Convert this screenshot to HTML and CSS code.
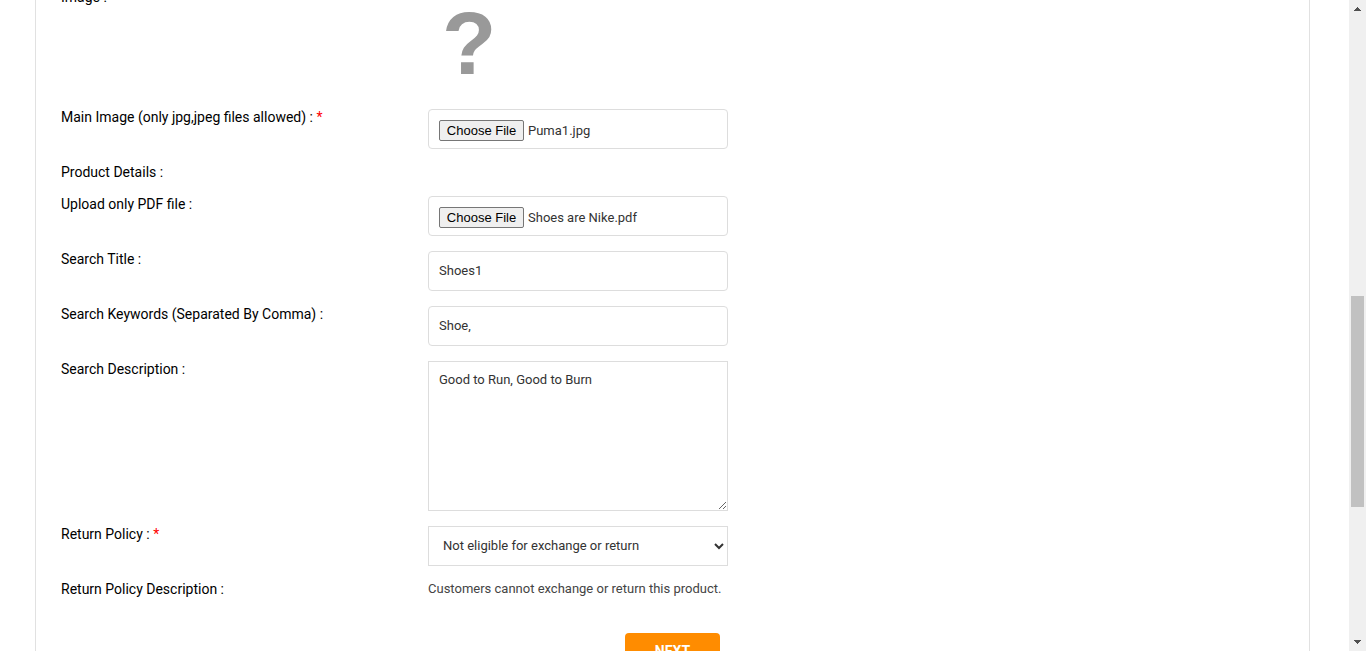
FILE: index.html
```html
<!DOCTYPE html>
<html lang="en">
<head>
<meta charset="utf-8">
<title>Product form</title>
<link rel="stylesheet" href="styles.css">
</head>
<body>
<div class="viewport">
  <main class="page">
    <form class="panel">
      <div class="row row-image">
        <label class="label">Image :</label>
        <div class="placeholder">?</div>
      </div>
      <div class="row">
        <label class="label">Main Image (only jpg,jpeg files allowed) : <span class="required">*</span></label>
        <div class="field file"><button type="button" class="choose">Choose File</button><span class="filename">Puma1.jpg</span></div>
      </div>
      <div class="row row-details">
        <label class="label">Product Details :</label>
      </div>
      <div class="row">
        <label class="label">Upload only PDF file :</label>
        <div class="field file"><button type="button" class="choose">Choose File</button><span class="filename">Shoes are Nike.pdf</span></div>
      </div>
      <div class="row">
        <label class="label" for="title">Search Title :</label>
        <input class="field" id="title" type="text" value="Shoes1">
      </div>
      <div class="row">
        <label class="label" for="keywords">Search Keywords (Separated By Comma) :</label>
        <input class="field" id="keywords" type="text" value="Shoe,">
      </div>
      <div class="row">
        <label class="label" for="description">Search Description :</label>
        <textarea class="field area" id="description">Good to Run, Good to Burn</textarea>
      </div>
      <div class="row">
        <label class="label" for="policy">Return Policy : <span class="required">*</span></label>
        <select class="field select" id="policy"><option>Not eligible for exchange or return</option></select>
      </div>
      <div class="row row-policy">
        <label class="label">Return Policy Description :</label>
        <p class="note">Customers cannot exchange or return this product.</p>
      </div>
      <button type="button" class="next">NEXT</button>
    </form>
  </main>
  <div class="scrollbar">
    <svg class="arrow" width="17" height="17" viewBox="0 0 17 17" shape-rendering="crispEdges"><path fill="#505050" d="M8 7h1v1h1v1h1v1h1v1H5v-1h1V9h1V8h1z"/></svg>
    <div class="track"><div class="thumb"></div></div>
    <svg class="arrow" width="17" height="17" viewBox="0 0 17 17" shape-rendering="crispEdges"><path fill="#505050" d="M5 6h7v1h-1v1h-1v1H9v1H8V9H7V8H6V7H5z"/></svg>
  </div>
</div>
</body>
</html>
```

FILE: styles.css
```css
* { box-sizing: border-box; }

body {
  margin: 0;
  overflow: hidden;
  background: #fff;
  font-family: Roboto, "Liberation Sans", sans-serif;
  font-size: 14px;
  color: #000;
}

.viewport {
  display: flex;
  height: 651px;
  overflow: hidden;
}

.page {
  flex: 1;
  padding: 0 39px 0 35px;
  overflow: hidden;
}

.panel {
  display: flex;
  flex-direction: column;
  height: 720px;
  margin-top: -11px;
  padding: 0 25px;
  border-left: 1px solid #e1e1e1;
  border-right: 1px solid #e1e1e1;
}

.row {
  display: flex;
  flex-shrink: 0;
  align-items: flex-start;
  margin-bottom: 15px;
}

.row-image { height: 120px; margin-bottom: 0; }
.row-details { height: 32px; margin-bottom: 0; }
.row-policy { height: 52px; margin-bottom: 0; }

.label {
  width: 367px;
  line-height: 16px;
}

.required { color: #f00; }

.placeholder {
  padding: 9px 0 0 14px;
  font: bold 89px/90px "Liberation Sans", sans-serif;
  color: #999;
}

.field {
  width: 300px;
  height: 40px;
  margin: 0;
  padding: 0 10px;
  border: 1px solid #ddd;
  border-radius: 4px;
  background: #fff;
  font-family: inherit;
  font-size: 13px;
  color: #333;
  outline: 0;
}

input.field { padding-bottom: 1px; }

.file {
  display: flex;
  align-items: center;
  gap: 4px;
  padding-top: 2px;
}

.choose {
  width: 85px;
  height: 21px;
  padding: 0;
  border: 1px solid #767676;
  border-radius: 2px;
  background: #efefef;
  font: 13px "Liberation Sans", sans-serif;
  color: #000;
}

.area {
  height: 150px;
  padding: 10px;
  border-radius: 0;
  line-height: 16px;
  resize: both;
}

.select {
  padding: 0 1px 1px 10px;
  border-radius: 0;
}

.note {
  margin: 0;
  font-size: 13px;
  line-height: 15px;
  color: #444;
}

.next {
  flex-shrink: 0;
  width: 95px;
  height: 35px;
  margin-left: 564px;
  padding: 1px 0 0;
  border: 0;
  border-radius: 4px;
  background: #ff8c00;
  font: bold 14px Roboto, sans-serif;
  color: #fff;
}

.scrollbar {
  display: flex;
  flex-direction: column;
  width: 17px;
  background: #f0f0f0;
}

.arrow { display: block; }

.track {
  flex: 1;
  padding: 279px 2px 0;
}

.thumb {
  height: 211px;
  background: #c1c1c1;
}
```
